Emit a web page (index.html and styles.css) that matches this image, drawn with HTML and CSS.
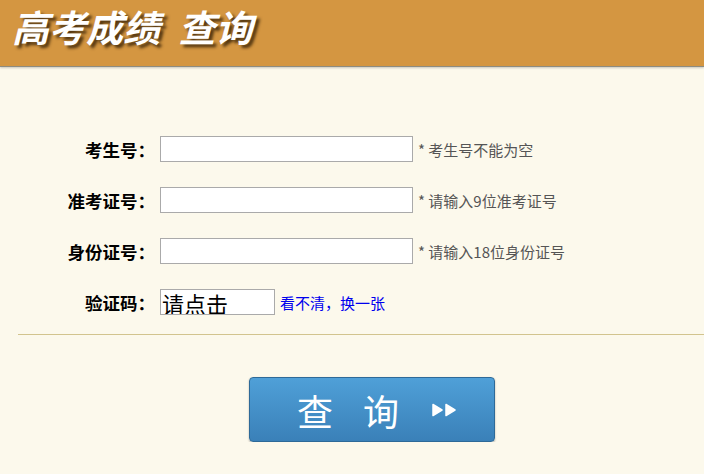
FILE: index.html
```html
<!DOCTYPE html>
<html lang="zh-CN">
<head>
    <meta charset="UTF-8">
    <meta name="viewport" content="width=device-width, initial-scale=1.0">
    <title>高考成绩查询</title>
    <link rel="stylesheet" href="styles.css">
</head>
<body>
    <div class="header">
        <h1>高考成绩 查询</h1>
    </div>

    <form class="query-form">
        <div class="row">
            <label for="ksh">考生号：</label>
            <input type="text" id="ksh" class="field">
            <span class="tip">* 考生号不能为空</span>
        </div>
        <div class="row">
            <label for="zkzh">准考证号：</label>
            <input type="text" id="zkzh" class="field">
            <span class="tip">* 请输入9位准考证号</span>
        </div>
        <div class="row">
            <label for="sfzh">身份证号：</label>
            <input type="text" id="sfzh" class="field">
            <span class="tip">* 请输入18位身份证号</span>
        </div>
        <div class="row row-last">
            <label for="yzm">验证码：</label>
            <input type="text" id="yzm" class="captcha" value="请点击">
            <a href="#" class="refresh">看不清，换一张</a>
        </div>

        <div class="divider"></div>

        <div class="actions">
            <button type="button" class="submit">
                <span>查</span><span>询</span>
                <svg width="26" height="14" viewBox="0 0 26 14">
                    <path d="M2 1.5 L11 7 L2 12.5 Z" fill="#fff" stroke="#fff" stroke-width="1.5" stroke-linejoin="round"/>
                    <path d="M15 1.5 L24 7 L15 12.5 Z" fill="#fff" stroke="#fff" stroke-width="1.5" stroke-linejoin="round"/>
                </svg>
            </button>
        </div>
    </form>
</body>
</html>
```

FILE: styles.css
```css
body {
    margin: 0;
    background-color: #fcf9ec;
    font-family: "Noto Sans CJK SC", "Noto Sans", sans-serif;
    color: #000;
}

.header {
    height: 66px;
    background-color: #d49641;
    border-bottom: 1px solid #8e8c80;
    box-shadow: 0 1px 2px rgba(0, 0, 0, 0.2);
}

.header h1 {
    margin: 0;
    padding-left: 12px;
    font-size: 37px;
    line-height: 52px;
    font-style: italic;
    font-weight: bold;
    color: #fff;
    word-spacing: 10px;
    text-shadow: 3px 3px 3px rgba(50, 30, 5, 0.8);
}

.query-form {
    padding-top: 69px;
}

.row {
    display: flex;
    align-items: center;
    height: 26px;
    margin-bottom: 25px;
}

.row-last {
    margin-bottom: 0;
}

.row label {
    width: 155px;
    margin-right: 5px;
    text-align: right;
    font-size: 17.5px;
    font-weight: bold;
    white-space: nowrap;
}

.field {
    width: 253px;
    height: 26px;
    padding: 0 4px;
    border: 1px solid #aaa;
    background: #fff;
    box-sizing: border-box;
}

.tip {
    margin-left: 5px;
    font-size: 15px;
    color: #555;
}

.captcha {
    width: 115px;
    height: 26px;
    padding: 2px 1px 0;
    border: 1px solid #aaa;
    background: #fff;
    box-sizing: border-box;
    font-family: "Noto Sans CJK SC", sans-serif;
    font-size: 22px;
    line-height: 24px;
    color: #000;
}

.refresh {
    margin-left: 5px;
    font-size: 15px;
    color: #0000ee;
    text-decoration: none;
}

.divider {
    margin: 19px 0 0 18px;
    border-top: 1px solid #d2c48e;
}

.actions {
    padding: 42px 0 0 249px;
}

.submit {
    display: flex;
    align-items: center;
    width: 246px;
    height: 65px;
    padding: 0 0 0 47px;
    border: 1px solid #2e6a98;
    border-radius: 4px;
    background: linear-gradient(#4fa0d8, #3a80b8);
    box-shadow: 0 1px 2px rgba(0, 0, 0, 0.3);
    color: #fff;
    font-family: "Noto Sans CJK SC", sans-serif;
    font-size: 36px;
    font-weight: 400;
    cursor: pointer;
    box-sizing: border-box;
}

.submit span {
    margin-right: 30px;
}

.submit svg {
    margin-left: 2px;
}
```
